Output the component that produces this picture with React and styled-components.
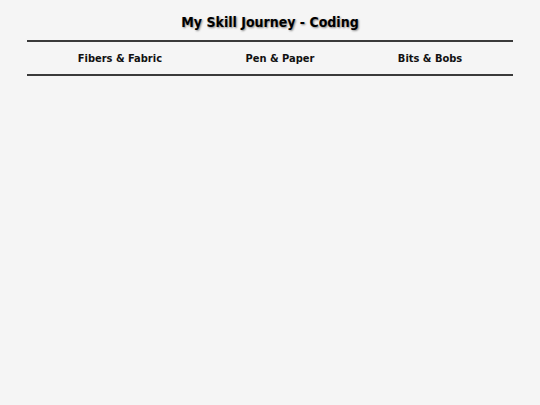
import React from "react";
import styled, { createGlobalStyle } from "styled-components";

const GlobalStyle = createGlobalStyle`
	body {
		margin: 0;
		background-color: #f5f5f5;
		font-family: "DejaVu Sans Condensed", "DejaVu Sans", Verdana, sans-serif;
	}
`;

const links = ["Fibers & Fabric", "Pen & Paper", "Bits & Bobs"];

const App = () => {
	return (
		<>
			<GlobalStyle />
			<Page>
				<Title>My Skill Journey - Coding</Title>
				<Nav>
					{links.map((label) => (
						<NavLink key={label} href="#">
							{label}
						</NavLink>
					))}
				</Nav>
			</Page>
		</>
	);
};

export default App;

const Page = styled.div`
	width: 90%;
	margin: 0 auto;
	display: flex;
	flex-direction: column;
	align-items: center;
`;

const Title = styled.h1`
	margin: 14px 0 10px;
	font-family: "Comic Sans MS", "DejaVu Sans Condensed", sans-serif;
	font-size: 14px;
	font-weight: bold;
	color: #000;
	text-shadow: 1px 1px 2px rgba(0, 0, 0, 0.45);
`;

const Nav = styled.nav`
	width: 100%;
	box-sizing: border-box;
	display: flex;
	justify-content: space-around;
	align-items: center;
	padding: 0 9px;
	height: 36px;
	border-top: 2px solid #3a3a3a;
	border-bottom: 2px solid #3a3a3a;
`;

const NavLink = styled.a`
	font-size: 11px;
	font-weight: bold;
	color: #111;
	text-decoration: none;
`;
